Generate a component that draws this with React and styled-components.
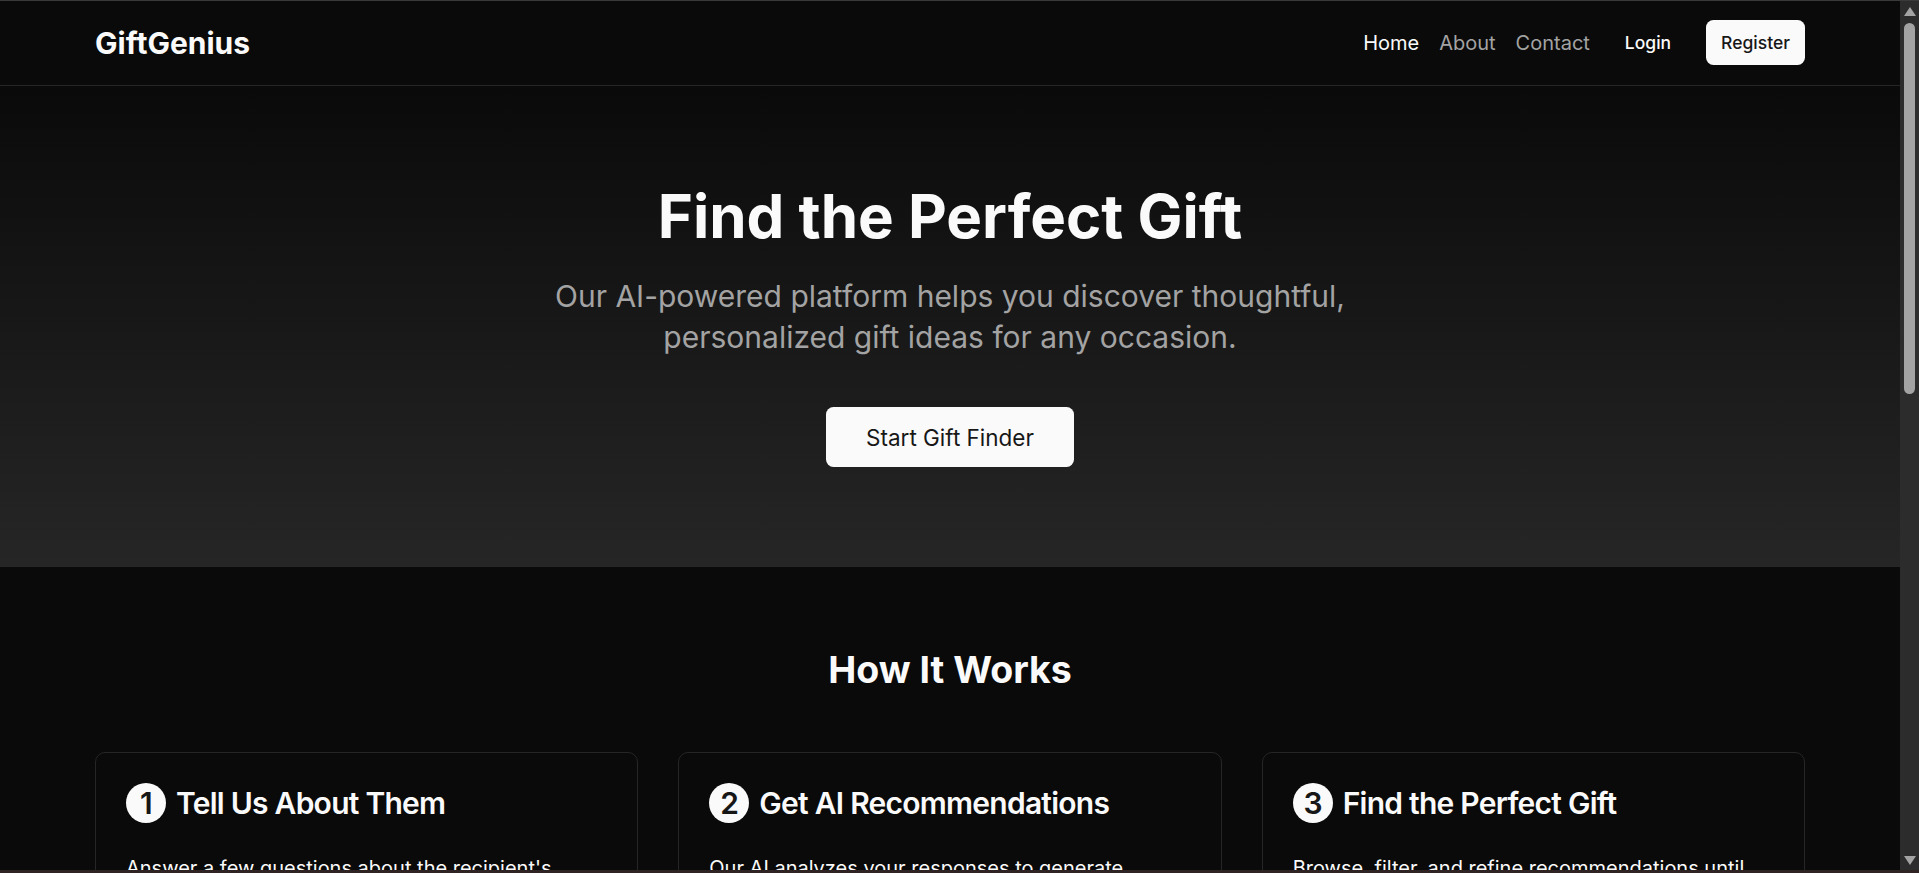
import React from "react";
import styled, { createGlobalStyle } from "styled-components";

const GlobalStyle = createGlobalStyle`
  html {
    color-scheme: dark;
    background: #0a0a0a;
  }
  body {
    margin: 0;
    padding-right: 19px;
    background: #0a0a0a;
    color: #fafafa;
    font-family: Inter, "Noto Sans", Roboto, sans-serif;
  }
  * {
    box-sizing: border-box;
  }
`;

const Page = styled.div`
  zoom: 1.25;
  min-height: 100vh;
`;

/* window edges and the classic scrollbar seen in the screenshot */
const WindowFrame = styled.div`
  position: fixed;
  inset: 0;
  border-top: 1px solid #3a3a3a;
  border-bottom: 3px solid #2f2323;
  pointer-events: none;
  z-index: 10;
`;

const ScrollTrack = styled.div`
  position: fixed;
  top: 0;
  right: 0;
  bottom: 0;
  width: 19px;
  display: flex;
  flex-direction: column;
  align-items: center;
  background: #2c2c2c;
  z-index: 9;
`;

const ScrollArrow = styled.svg`
  display: block;
  width: 12px;
  height: 9px;
  margin: ${(p) => (p.$down ? "auto 0 8px" : "7px 0 0")};
  fill: #a3a3a3;
`;

const ScrollThumb = styled.div`
  width: 11px;
  height: 371px;
  margin-top: 7px;
  border-radius: 6px;
  background: #a3a3a3;
`;

const Container = styled.div`
  max-width: 1400px;
  margin: 0 auto;
  padding: 0 16px;
`;

const Header = styled.header`
  background: #0a0a0a;
  border-bottom: 1px solid #262626;
`;

const NavBar = styled(Container)`
  display: flex;
  align-items: center;
  justify-content: space-between;
  padding-top: 16px;
  padding-bottom: 16px;
`;

const Logo = styled.a`
  font-size: 24px;
  line-height: 32px;
  font-weight: 700;
  color: #fafafa;
  text-decoration: none;
`;

const Nav = styled.nav`
  display: flex;
  align-items: center;
  gap: 16px;
`;

const NavLink = styled.a`
  font-size: 16px;
  line-height: 24px;
  color: ${(p) => (p.$active ? "#fafafa" : "#a3a3a3")};
  text-decoration: none;
`;

const Button = styled.button`
  display: inline-flex;
  align-items: center;
  justify-content: center;
  height: ${(p) => (p.$large ? "48px" : "36px")};
  padding: 0 ${(p) => (p.$large ? "32px" : "12px")};
  border: none;
  border-radius: 6px;
  font-family: inherit;
  font-size: ${(p) => (p.$large ? "18px" : "14px")};
  font-weight: ${(p) => (p.$large ? 400 : 500)};
  background: ${(p) => (p.$ghost ? "transparent" : "#fafafa")};
  color: ${(p) => (p.$ghost ? "#fafafa" : "#171717")};
  cursor: pointer;
`;

const Hero = styled.section`
  background: linear-gradient(to bottom, #0a0a0a, #262626);
  padding: 80px 0;
  text-align: center;
`;

const HeroTitle = styled.h1`
  margin: 0 0 24px;
  font-size: 48px;
  line-height: 1;
  font-weight: 700;
  color: #fafafa;
`;

const HeroText = styled.p`
  max-width: 672px;
  margin: 0 auto 40px;
  font-size: 24px;
  line-height: 32.5px;
  color: #a3a3a3;
`;

const Steps = styled.section`
  padding: 64px 0;
`;

const SectionTitle = styled.h2`
  margin: 0 0 48px;
  font-size: 30px;
  line-height: 36px;
  font-weight: 700;
  text-align: center;
`;

const Grid = styled.div`
  display: grid;
  grid-template-columns: repeat(3, 1fr);
  gap: 32px;
`;

const Card = styled.div`
  border: 1px solid #262626;
  border-radius: 8px;
  background: #0a0a0a;
`;

const CardHeader = styled.div`
  padding: 24px;
`;

const CardTitle = styled.h3`
  display: flex;
  align-items: center;
  gap: 8px;
  margin: 0;
  font-size: 24px;
  line-height: 1;
  font-weight: 600;
  letter-spacing: -0.025em;
`;

const StepNumber = styled.span`
  display: flex;
  align-items: center;
  justify-content: center;
  width: 32px;
  height: 32px;
  border-radius: 50%;
  background: #fafafa;
  color: #171717;
`;

const CardBody = styled.div`
  padding: 0 24px 24px;
  font-size: 16px;
  line-height: 24px;
  color: #fafafa;
`;

const steps = [
  {
    title: "Tell Us About Them",
    text: "Answer a few questions about the recipient's interests, personality, and your relationship with them.",
  },
  {
    title: "Get AI Recommendations",
    text: "Our AI analyzes your responses to generate personalized gift suggestions tailored to them.",
  },
  {
    title: "Find the Perfect Gift",
    text: "Browse, filter, and refine recommendations until you find the gift that feels just right.",
  },
];

export default function App() {
  return (
    <>
      <GlobalStyle />
      <Page>
        <Header>
          <NavBar>
            <Logo href="#">GiftGenius</Logo>
            <Nav>
              <NavLink href="#" $active>
                Home
              </NavLink>
              <NavLink href="#">About</NavLink>
              <NavLink href="#">Contact</NavLink>
              <Button $ghost>Login</Button>
              <Button>Register</Button>
            </Nav>
          </NavBar>
        </Header>

        <Hero>
          <Container>
            <HeroTitle>Find the Perfect Gift</HeroTitle>
            <HeroText>
              Our AI-powered platform helps you discover thoughtful,
              personalized gift ideas for any occasion.
            </HeroText>
            <Button $large>Start Gift Finder</Button>
          </Container>
        </Hero>

        <Steps>
          <Container>
            <SectionTitle>How It Works</SectionTitle>
            <Grid>
              {steps.map((step, i) => (
                <Card key={step.title}>
                  <CardHeader>
                    <CardTitle>
                      <StepNumber>{i + 1}</StepNumber>
                      {step.title}
                    </CardTitle>
                  </CardHeader>
                  <CardBody>{step.text}</CardBody>
                </Card>
              ))}
            </Grid>
          </Container>
        </Steps>
      </Page>

      <ScrollTrack aria-hidden="true">
        <ScrollArrow viewBox="0 0 12 9">
          <polygon points="6,0 12,9 0,9" />
        </ScrollArrow>
        <ScrollThumb />
        <ScrollArrow viewBox="0 0 12 9" $down>
          <polygon points="0,0 12,0 6,9" />
        </ScrollArrow>
      </ScrollTrack>
      <WindowFrame aria-hidden="true" />
    </>
  );
}
